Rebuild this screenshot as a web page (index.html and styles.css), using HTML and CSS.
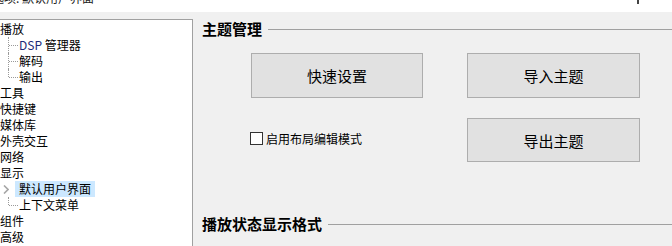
FILE: index.html
```html
<!DOCTYPE html>
<html lang="zh-CN">
<head>
<meta charset="utf-8">
<title>首选项: 默认用户界面</title>
<link rel="stylesheet" href="styles.css">
</head>
<body>
<div class="titlebar">
  <span class="title-text">首选项: 默认用户界面</span>
  <span class="title-mark"></span>
</div>
<div class="main">
  <div class="tree">
    <div class="row">播放</div>
    <div class="row child"><span class="guide mid"></span><span class="label"><span class="dsp">DSP</span> 管理器</span></div>
    <div class="row child"><span class="guide mid"></span><span class="label">解码</span></div>
    <div class="row child"><span class="guide last"></span><span class="label">输出</span></div>
    <div class="row">工具</div>
    <div class="row">快捷键</div>
    <div class="row">媒体库</div>
    <div class="row">外壳交互</div>
    <div class="row">网络</div>
    <div class="row">显示</div>
    <div class="row child"><span class="guide chev"><svg width="6" height="9" viewBox="0 0 6 9"><polyline points="1,0.5 5,4.5 1,8.5" fill="none" stroke="#a6a6a6" stroke-width="1.6"/></svg></span><span class="label selected">默认用户界面</span></div>
    <div class="row child"><span class="guide last"></span><span class="label">上下文菜单</span></div>
    <div class="row">组件</div>
    <div class="row">高级</div>
  </div>
  <div class="panel">
    <div class="section-head"><span class="section-title">主题管理</span><span class="section-line"></span></div>
    <div class="theme-grid">
      <button class="btn">快速设置</button>
      <button class="btn">导入主题</button>
      <label class="check"><span class="box"></span><span>启用布局编辑模式</span></label>
      <button class="btn btn-low">导出主题</button>
    </div>
    <div class="section-head second"><span class="section-title">播放状态显示格式</span><span class="section-line"></span></div>
  </div>
</div>
</body>
</html>
```
FILE: styles.css
```css
* { box-sizing: border-box; }
html, body {
  margin: 0;
  padding: 0;
}
body {
  width: 672px;
  height: 246px;
  overflow: hidden;
  background: #f0f0f0;
  font-family: "Noto Sans CJK SC", "Microsoft YaHei", sans-serif;
  color: #000;
}
.titlebar {
  height: 12px;
  background: #fff;
  overflow: hidden;
  display: flex;
  justify-content: space-between;
  align-items: flex-start;
}
.title-text {
  display: block;
  font-size: 12px;
  line-height: 12px;
  margin-top: -8px;
  margin-left: -20px;
  white-space: nowrap;
  color: #222;
}
.title-mark {
  display: block;
  width: 2px;
  height: 4px;
  background: #444;
  margin-right: 33px;
}
.main {
  display: flex;
  height: 234px;
}
.tree {
  width: 194px;
  margin-left: -1px;
  margin-top: 7px;
  background: #fff;
  border: 1px solid #a0a0a0;
  border-bottom: none;
  padding-top: 1px;
  font-size: 12px;
  overflow: hidden;
}
.row {
  height: 16px;
  line-height: 16px;
  display: flex;
  align-items: center;
  white-space: nowrap;
}
.child .label {
  padding: 0 4px;
  line-height: 16px;
}
.label.selected {
  background: #cce8ff;
}
.dsp { color: #1c2a78; }
.guide {
  position: relative;
  width: 15px;
  height: 16px;
  flex: none;
}
.guide.mid::before,
.guide.last::before {
  content: "";
  position: absolute;
  left: 8px;
  top: 0;
  height: 16px;
  border-left: 1px dotted #9a9a9a;
}
.guide.last::before { height: 8px; }
.guide.mid::after,
.guide.last::after {
  content: "";
  position: absolute;
  left: 9px;
  top: 8px;
  width: 9px;
  border-top: 1px dotted #9a9a9a;
}
.guide.chev {
  display: flex;
  align-items: center;
  padding-left: 3px;
}
.guide.chev svg { display: block; }
.panel {
  flex: 1;
  padding-left: 9px;
}
.section-head {
  display: flex;
  align-items: center;
  height: 20px;
  margin-top: 7px;
  gap: 6px;
}
.section-title {
  font-size: 15px;
  font-weight: bold;
  line-height: 20px;
  white-space: nowrap;
}
.section-line {
  flex: 1;
  border-top: 1px solid #a0a0a0;
  margin-top: 1px;
}
.section-head.second {
  margin-top: 52px;
}
.theme-grid {
  display: grid;
  grid-template-columns: 173px 173px;
  column-gap: 44px;
  row-gap: 20px;
  margin-top: 14px;
  margin-left: 48px;
}
.btn {
  font-family: inherit;
  font-size: 15px;
  height: 45px;
  background: #e1e1e1;
  border: 1px solid #adadad;
  color: #000;
  padding: 0;
  margin: 0;
}
.theme-grid .btn:first-child { margin-left: 1px; width: 172px; }
.btn-low { height: 44px; }
.check {
  display: flex;
  align-items: center;
  align-self: start;
  margin-top: 14px;
  font-size: 12px;
  line-height: 13px;
  gap: 3px;
}
.box {
  width: 13px;
  height: 13px;
  border: 1px solid #333;
  background: #fff;
  flex: none;
}
```
